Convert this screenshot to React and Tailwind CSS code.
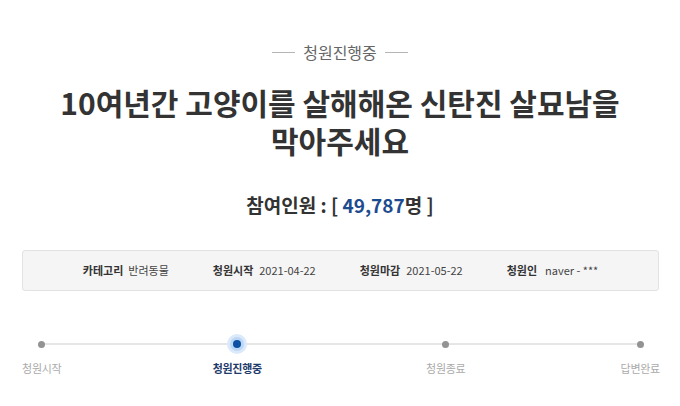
import React from "react";

const steps = [
  { label: "청원시작", active: false },
  { label: "청원진행중", active: true },
  { label: "청원종료", active: false },
  { label: "답변완료", active: false },
];

// gap before each step column (columns are 80px wide, centred on the dots)
const stepGaps = ["ml-[2px]", "ml-[116px]", "ml-[129px]", "ml-[115px]"];

export default function App() {
  return (
    <div
      className="w-[680px] h-[406px] bg-white overflow-hidden"
      style={{ fontFamily: '"Noto Sans CJK KR", "Noto Sans", sans-serif' }}
    >
      {/* 상태 */}
      <div className="pt-[41px] flex items-center justify-center gap-[8px]">
        <span className="w-[23px] h-px bg-[#b5b5b5]" />
        <span className="text-[16px] leading-[22px] text-[#666]">청원진행중</span>
        <span className="w-[23px] h-px bg-[#b5b5b5]" />
      </div>

      {/* 제목 */}
      <h1 className="mt-[20px] text-center text-[30px] leading-[38px] font-bold text-[#333]">
        10여년간 고양이를 살해해온 신탄진 살묘남을
        <br />
        막아주세요
      </h1>

      {/* 참여인원 */}
      <p className="mt-[33px] text-center text-[19px] leading-[26px] font-bold text-[#333]">
        참여인원 : [ <span className="text-[#1d4b8f]">49,787</span>명 ]
      </p>

      {/* 정보 박스 */}
      <div className="mt-[32px] mx-[22px] w-[637px] h-[41px] bg-[#f5f5f5] border border-[#e2e2e2] rounded-[3px] flex items-center justify-center gap-[44px] text-[11px] text-[#444]">
        <div className="flex gap-[5px]">
          <span className="font-bold text-[#333]">카테고리</span>
          <span>반려동물</span>
        </div>
        <div className="flex gap-[6px]">
          <span className="font-bold text-[#333]">청원시작</span>
          <span>2021-04-22</span>
        </div>
        <div className="flex gap-[6px]">
          <span className="font-bold text-[#333]">청원마감</span>
          <span>2021-05-22</span>
        </div>
        <div className="flex gap-[8px]">
          <span className="font-bold text-[#333]">청원인</span>
          <span>naver - ***</span>
        </div>
      </div>

      {/* 진행 단계 */}
      <div className="relative mt-[41px]">
        <div className="absolute left-[42px] w-[600px] top-[11px] h-[2px] bg-[#e6e6e6]" />
        <div className="relative flex">
          {steps.map((s, i) => (
            <div key={s.label} className={`${stepGaps[i]} w-[80px] flex flex-col items-center`}>
              <div className="h-[24px] flex items-center justify-center">
                {s.active ? (
                  <span className="w-[20px] h-[20px] rounded-full bg-[#dbe9fb] flex items-center justify-center">
                    <span className="w-[14px] h-[14px] rounded-full bg-[#bcd6f6] flex items-center justify-center">
                      <span className="w-[8px] h-[8px] rounded-full bg-[#0d4fa3]" />
                    </span>
                  </span>
                ) : (
                  <span className="w-[7px] h-[7px] rounded-full bg-[#939393]" />
                )}
              </div>
              <span
                className={
                  s.active
                    ? "mt-[3px] text-[11px] leading-[18px] tracking-[-0.3px] font-bold text-[#1f3b6b]"
                    : "mt-[3px] text-[11px] leading-[18px] tracking-[-0.3px] text-[#aaa]"
                }
              >
                {s.label}
              </span>
            </div>
          ))}
        </div>
      </div>
    </div>
  );
}
